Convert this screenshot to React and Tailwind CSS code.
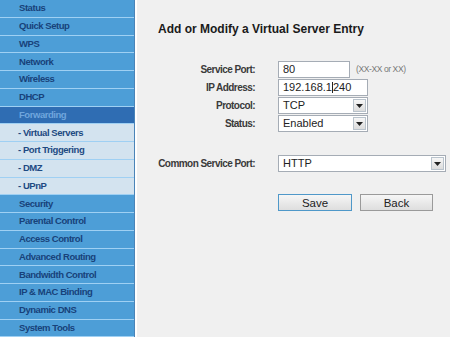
import React from "react";

const items = [
  { t: "Status", k: "main" },
  { t: "Quick Setup", k: "main" },
  { t: "WPS", k: "main" },
  { t: "Network", k: "main" },
  { t: "Wireless", k: "main" },
  { t: "DHCP", k: "main" },
  { t: "Forwarding", k: "sel" },
  { t: "- Virtual Servers", k: "sub" },
  { t: "- Port Triggering", k: "sub" },
  { t: "- DMZ", k: "sub" },
  { t: "- UPnP", k: "sub" },
  { t: "Security", k: "main" },
  { t: "Parental Control", k: "main" },
  { t: "Access Control", k: "main" },
  { t: "Advanced Routing", k: "main" },
  { t: "Bandwidth Control", k: "main" },
  { t: "IP & MAC Binding", k: "main" },
  { t: "Dynamic DNS", k: "main" },
  { t: "System Tools", k: "main" },
];

function Arrow() {
  return (
    <div className="w-[13px] h-[13px] mr-[1px] border border-[#b9c3cc] bg-gradient-to-b from-[#f7f7f7] to-[#dcdcdc] flex items-center justify-center">
      <svg width="7" height="4" viewBox="0 0 7 4"><path d="M0 0h7L3.5 4z" fill="#222" /></svg>
    </div>
  );
}

function Select({ value, w }) {
  return (
    <div className={`h-[17px] ${w} bg-white border border-[#a5acb5] flex items-center justify-between`}>
      <span className="pl-[4px] text-[11px] text-[#222]">{value}</span>
      <Arrow />
    </div>
  );
}

function Row({ label, children, cls = "" }) {
  return (
    <div className={`flex items-center ${cls}`}>
      <div className="w-[118px] text-right whitespace-nowrap text-[10px] tracking-[-0.55px] font-bold text-[#3a3a3a]">{label}</div>
      <div className="ml-[23px] flex items-center">{children}</div>
    </div>
  );
}

export default function App() {
  return (
    <div className="w-[450px] h-[337px] flex overflow-hidden bg-[#f0f0f0]" style={{ fontFamily: '"Liberation Sans", Arial, sans-serif' }}>
      <div className="w-[134px] shrink-0 flex flex-col">
        {items.map((it, i) => {
          const bg =
            it.k === "sel"
              ? "bg-[#2f6db3] text-[#6fa6dd]"
              : it.k === "sub"
              ? "bg-[#d3e3ef] text-[#1d4a82]"
              : "bg-[#4d9ed7] text-[#18427a]";
          const pad = it.k === "sub" ? "pl-[18px]" : "pl-[19px]";
          return (
            <div
              key={i}
              className={`h-[17.75px] shrink-0 flex items-center border-b border-[#9fd0f3] text-[9.5px] tracking-[-0.45px] font-bold whitespace-nowrap ${bg} ${pad}`}
            >
              {it.t}
            </div>
          );
        })}
      </div>
      <div className="w-[1px] bg-[#4a84b8]" />
      <div className="w-[2px] bg-white" />
      <div className="flex-1 flex flex-col">
        <div className="mt-[20px] ml-[21px] text-[12px] font-bold text-[#1a1a1a]">Add or Modify a Virtual Server Entry</div>
        <div className="mt-[23px] flex flex-col gap-[1px]">
          <Row label="Service Port:">
            <div className="h-[17px] w-[72px] bg-white border border-[#a5acb5] text-[11px] pl-[4px] flex items-center text-[#222]">80</div>
            <span className="ml-[6px] text-[8.5px] tracking-[-0.4px] text-[#777]">(XX-XX or XX)</span>
          </Row>
          <Row label="IP Address:">
            <div className="h-[17px] w-[90px] bg-white border border-[#a5acb5] text-[11px] pl-[4px] flex items-center text-[#222]">
              192.168.1<span className="inline-block w-[1px] h-[11px] bg-[#222]" />240
            </div>
          </Row>
          <Row label="Protocol:">
            <Select value="TCP" w="w-[90px]" />
          </Row>
          <Row label="Status:">
            <Select value="Enabled" w="w-[90px]" />
          </Row>
          <Row label="Common Service Port:" cls="mt-[22px]">
            <Select value="HTTP" w="w-[168px]" />
          </Row>
          <Row label="" cls="mt-[21px]">
            <button className="h-[17px] w-[74px] border border-[#4f98c9] bg-gradient-to-b from-[#f6f6f6] to-[#dedede] text-[11.5px] text-[#222]">Save</button>
            <button className="ml-[8px] h-[17px] w-[73px] border border-[#9a9a9a] bg-gradient-to-b from-[#f6f6f6] to-[#dedede] text-[11.5px] text-[#222]">Back</button>
          </Row>
        </div>
      </div>
    </div>
  );
}
